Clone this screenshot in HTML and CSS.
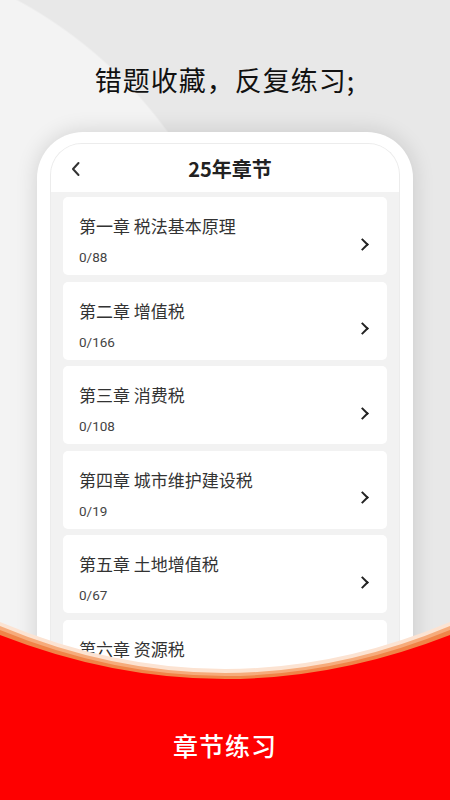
FILE: index.html
```html
<!DOCTYPE html>
<html lang="zh-CN">
<head>
    <meta charset="UTF-8">
    <meta name="viewport" content="width=device-width, initial-scale=1.0">
    <title>章节练习</title>
    <link rel="stylesheet" href="styles.css">
</head>
<body>
    <div class="page">
        <h1 class="slogan">错题收藏，反复练习;</h1>

        <div class="phone">
            <div class="screen">
                <div class="nav-bar">
                    <svg class="back" width="10" height="16" viewBox="0 0 10 16">
                        <path d="M7.5 2 L2 8 L7.5 14" fill="none" stroke="#333" stroke-width="2" stroke-linecap="round" stroke-linejoin="round"/>
                    </svg>
                    <div class="nav-title">25年章节</div>
                </div>

                <div class="chapter-list">
                    <div class="chapter">
                        <div class="chapter-info">
                            <div class="chapter-name">第一章 税法基本原理</div>
                            <div class="chapter-count">0/88</div>
                        </div>
                        <span class="chevron"></span>
                    </div>
                    <div class="chapter">
                        <div class="chapter-info">
                            <div class="chapter-name">第二章 增值税</div>
                            <div class="chapter-count">0/166</div>
                        </div>
                        <span class="chevron"></span>
                    </div>
                    <div class="chapter">
                        <div class="chapter-info">
                            <div class="chapter-name">第三章 消费税</div>
                            <div class="chapter-count">0/108</div>
                        </div>
                        <span class="chevron"></span>
                    </div>
                    <div class="chapter">
                        <div class="chapter-info">
                            <div class="chapter-name">第四章 城市维护建设税</div>
                            <div class="chapter-count">0/19</div>
                        </div>
                        <span class="chevron"></span>
                    </div>
                    <div class="chapter">
                        <div class="chapter-info">
                            <div class="chapter-name">第五章 土地增值税</div>
                            <div class="chapter-count">0/67</div>
                        </div>
                        <span class="chevron"></span>
                    </div>
                    <div class="chapter">
                        <div class="chapter-info">
                            <div class="chapter-name">第六章 资源税</div>
                            <div class="chapter-count">0/52</div>
                        </div>
                        <span class="chevron"></span>
                    </div>
                </div>
            </div>
        </div>

        <!-- red wave banner sits over the bottom of the phone -->
        <div class="banner">
            <svg class="wave" width="450" height="200" viewBox="0 0 450 200" preserveAspectRatio="none">
                <path d="M0 22 Q225 116 450 22 L450 200 L0 200 Z" fill="#fce3d2"/>
                <path d="M0 26 Q225 120 450 26 L450 200 L0 200 Z" fill="#f6ab7b"/>
                <path d="M0 30 Q225 122 450 30 L450 200 L0 200 Z" fill="#f08448"/>
                <path d="M0 35 Q225 123 450 35 L450 200 L0 200 Z" fill="#fe0000"/>
            </svg>
            <div class="banner-text">章节练习</div>
        </div>
    </div>
</body>
</html>
```

FILE: styles.css
```css
body {
    margin: 0;
    font-family: "Noto Sans CJK SC", "Noto Sans", sans-serif;
    background-color: #e8e8e8;
}

.page {
    position: relative;
    height: 800px;
    overflow: hidden;
    background-color: #e8e8e8;
    background-image: radial-gradient(circle 456px at -200px 400px, #f3f3f3 99.6%, rgba(243, 243, 243, 0) 100%);
}

.slogan {
    margin: 0;
    padding-top: 62px;
    height: 70px;
    line-height: 36px;
    text-align: center;
    font-size: 27px;
    font-weight: 400;
    letter-spacing: 1px;
    color: #111;
}

.phone {
    margin: 0 37px;
    padding: 11px 13px 0;
    height: 700px;
    background-color: #fff;
    border-radius: 46px 46px 0 0;
    box-shadow: 0 0 22px rgba(0, 0, 0, 0.14);
}

.screen {
    height: 100%;
    background-color: #f2f2f2;
    border: 1px solid #ececec;
    border-bottom: none;
    border-radius: 32px 32px 0 0;
    box-sizing: border-box;
    overflow: hidden;
}

.nav-bar {
    position: relative;
    height: 48px;
    padding-left: 10px;
    display: flex;
    align-items: center;
    justify-content: center;
    background-color: #fff;
}

.back {
    position: absolute;
    left: 20px;
    top: 17px;
}

.nav-title {
    font-size: 20px;
    font-weight: 700;
    color: #222;
}

.chapter-list {
    display: flex;
    flex-direction: column;
    gap: 6.6px;
    padding: 5px 12px 0;
}

.chapter {
    height: 78px;
    box-sizing: border-box;
    padding: 17px 16px 9px;
    display: flex;
    align-items: center;
    justify-content: space-between;
    background-color: #fff;
    border-radius: 5px;
}

.chapter-info {
    display: flex;
    flex-direction: column;
    gap: 10px;
    align-self: stretch;
}

.chapter-name {
    font-size: 17px;
    line-height: 24px;
    color: #333;
}

.chapter-count {
    font-family: Roboto, "Noto Sans", sans-serif;
    font-size: 13.5px;
    line-height: 18px;
    color: #444;
}

.chevron {
    width: 7px;
    height: 7px;
    margin-right: 4px;
    margin-top: 8px;
    border-top: 2px solid #222;
    border-right: 2px solid #222;
    transform: rotate(45deg);
}

.banner {
    position: absolute;
    left: 0;
    top: 600px;
    width: 450px;
    height: 200px;
}

.wave {
    position: absolute;
    left: 0;
    top: 0;
}

.banner-text {
    position: absolute;
    left: 0;
    right: 0;
    top: 127px;
    text-align: center;
    font-size: 25px;
    font-weight: 500;
    letter-spacing: 1px;
    color: #fff;
}
```
